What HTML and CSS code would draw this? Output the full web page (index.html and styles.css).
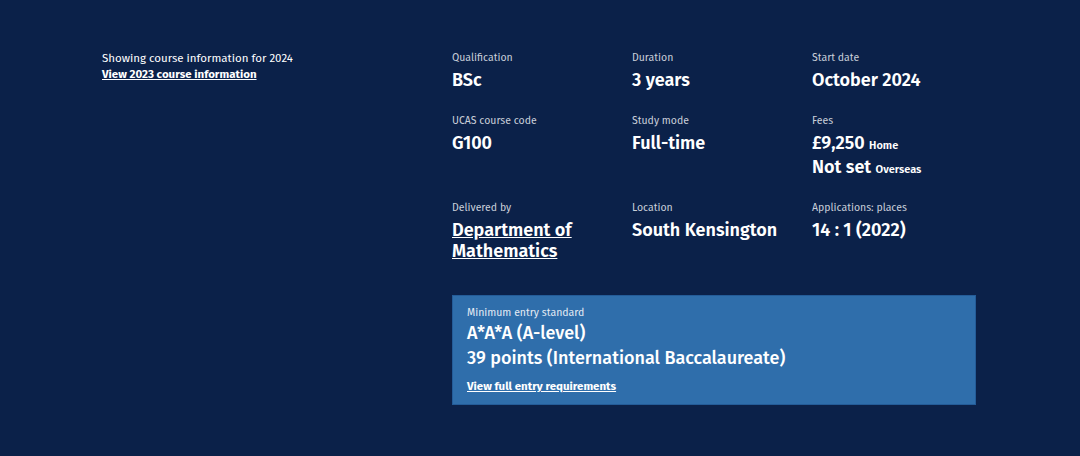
FILE: index.html
```html
<!DOCTYPE html>
<html lang="en">
<head>
  <meta charset="UTF-8">
  <meta name="viewport" content="width=device-width, initial-scale=1.0">
  <title>Mathematics BSc</title>
  <link rel="stylesheet" href="styles.css">
</head>
<body>

  <!-- Course summary -->
  <section class="course-summary">
    <div class="year-switch">
      <p>Showing course information for 2024</p>
      <a href="#">View 2023 course information</a>
    </div>

    <div class="summary-main">
      <dl class="facts">
        <div class="fact">
          <dt>Qualification</dt>
          <dd>BSc</dd>
        </div>
        <div class="fact">
          <dt>Duration</dt>
          <dd>3 years</dd>
        </div>
        <div class="fact">
          <dt>Start date</dt>
          <dd>October 2024</dd>
        </div>
        <div class="fact">
          <dt>UCAS course code</dt>
          <dd>G100</dd>
        </div>
        <div class="fact">
          <dt>Study mode</dt>
          <dd>Full-time</dd>
        </div>
        <div class="fact">
          <dt>Fees</dt>
          <dd class="fee">£9,250 <small>Home</small></dd>
          <dd class="fee">Not set <small>Overseas</small></dd>
        </div>
        <div class="fact">
          <dt>Delivered by</dt>
          <dd><a href="#">Department of Mathematics</a></dd>
        </div>
        <div class="fact">
          <dt>Location</dt>
          <dd>South Kensington</dd>
        </div>
        <div class="fact">
          <dt>Applications: places</dt>
          <dd>14 : 1 (2022)</dd>
        </div>
      </dl>

      <div class="entry-box">
        <p class="entry-label">Minimum entry standard</p>
        <p class="entry-value">A*A*A (A-level)</p>
        <p class="entry-value">39 points (International Baccalaureate)</p>
        <a href="#" class="entry-link">View full entry requirements</a>
      </div>
    </div>
  </section>

</body>
</html>
```

FILE: styles.css
```css
body {
  margin: 0;
  font-family: 'Fira Sans', 'Open Sans', 'Noto Sans', sans-serif;
  background-color: #0b2149;
  color: #fff;
  height: 456px;
  overflow: hidden;
}

a {
  color: #fff;
}

p {
  margin: 0;
}

/* Summary layout */
.course-summary {
  display: grid;
  grid-template-columns: 350px 524px;
  padding: 50px 0 0 102px;
}

.year-switch {
  font-size: 11.5px;
  line-height: 16px;
}

.year-switch a {
  font-weight: 700;
}

/* Key facts grid */
.facts {
  display: grid;
  grid-template-columns: 180px 180px 164px;
  row-gap: 22px;
  margin: 0;
}

.fact dt {
  font-size: 10.5px;
  line-height: 16px;
  color: #c9cfd9;
  margin-bottom: 4px;
}

.fact dd {
  margin: 0;
  font-size: 18px;
  line-height: 21px;
  font-weight: 600;
}

.fact dd.fee + dd.fee {
  margin-top: 3px;
}

.fact dd small {
  font-size: 11px;
  line-height: 0;
}

/* Entry requirements box */
.entry-box {
  margin-top: 33px;
  background-color: #2f6eab;
  border: 1px solid #245c98;
  padding: 9px 14px 10px;
}

.entry-label {
  font-size: 10.5px;
  line-height: 16px;
  color: #e4ebf4;
}

.entry-value {
  font-size: 18px;
  line-height: 25px;
  font-weight: 500;
}

.entry-link {
  display: inline-block;
  margin-top: 7px;
  font-size: 11.5px;
  line-height: 16px;
  font-weight: 700;
}
```
